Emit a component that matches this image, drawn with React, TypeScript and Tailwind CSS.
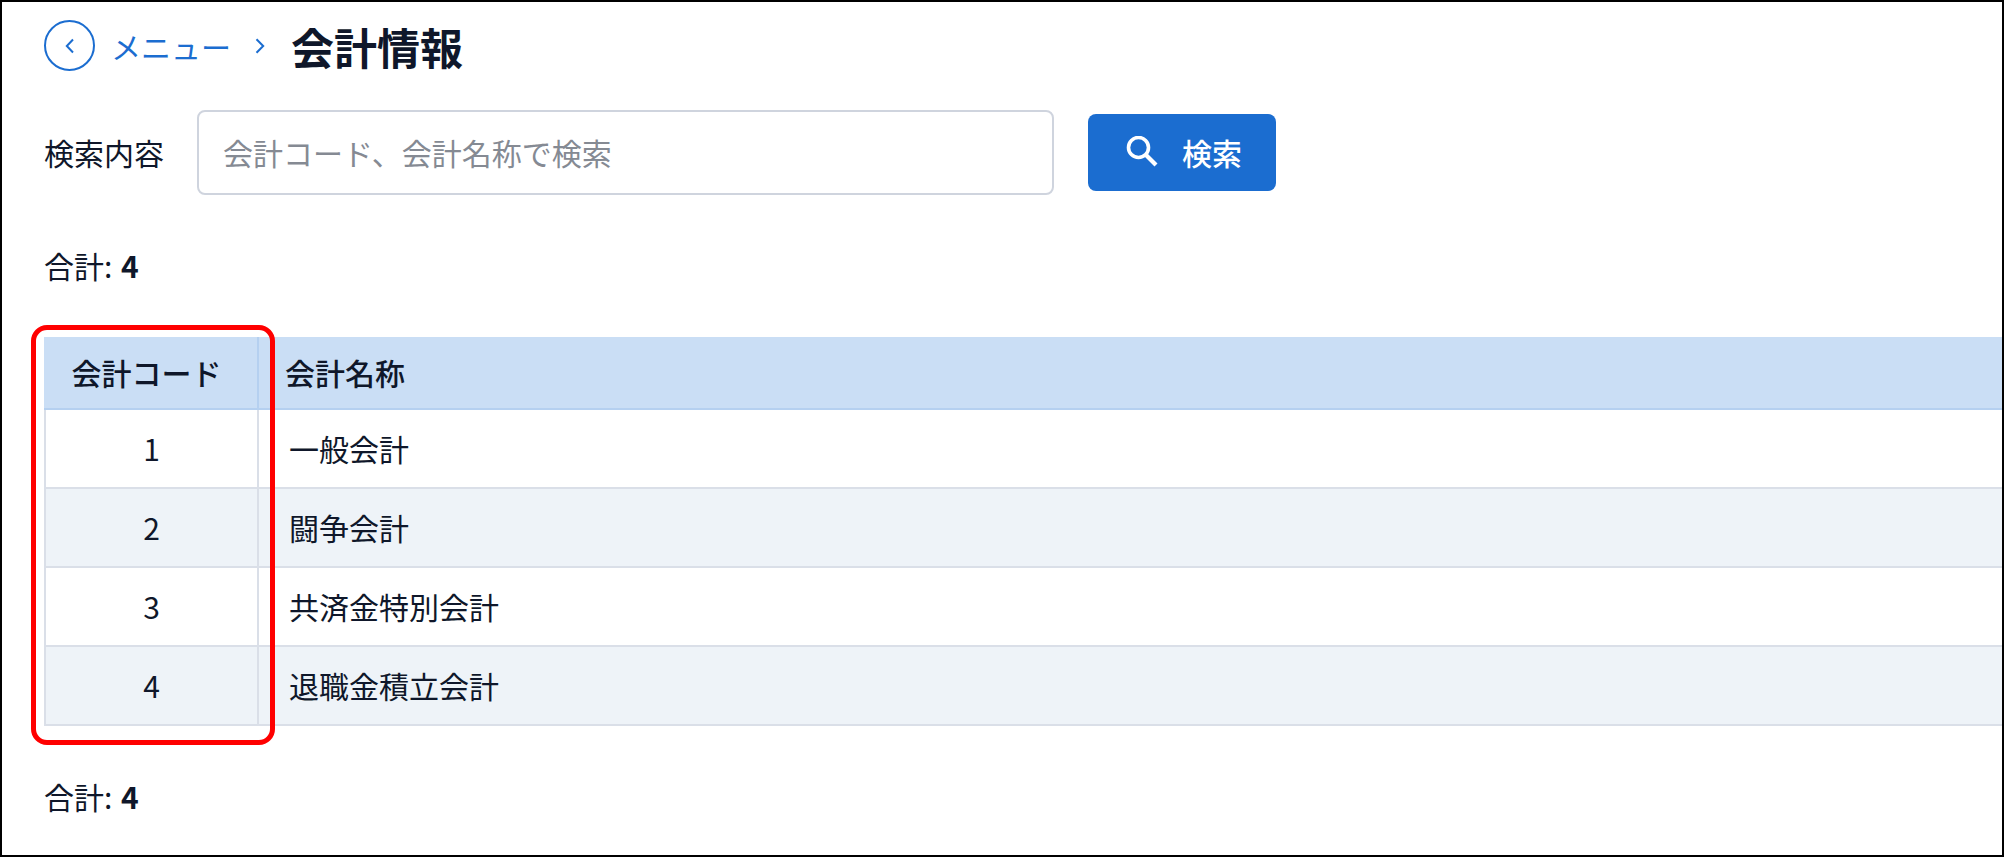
import React from "react";

type Account = { code: number; name: string };

const accounts: Account[] = [
  { code: 1, name: "一般会計" },
  { code: 2, name: "闘争会計" },
  { code: 3, name: "共済金特別会計" },
  { code: 4, name: "退職金積立会計" },
];

function Chevron({ direction }: { direction: "left" | "right" }) {
  return (
    <svg width="10" height="16" viewBox="0 0 10 16" fill="none" aria-hidden="true">
      <path
        d={direction === "left" ? "M8 1.5 1.8 8 8 14.5" : "M1.5 1.2 8.2 8 1.5 14.8"}
        stroke="currentColor"
        strokeWidth="2"
      />
    </svg>
  );
}

function SearchIcon() {
  return (
    <svg width="32" height="32" viewBox="0 0 32 32" fill="none" aria-hidden="true">
      <circle cx="12.5" cy="11.5" r="10" stroke="currentColor" strokeWidth="3.6" />
      <path d="M19.5 18.5 30 29" stroke="currentColor" strokeWidth="4.2" />
    </svg>
  );
}

function Total() {
  return (
    <p className="text-[30px] leading-11">
      合計: <strong className="ml-0.5 font-bold">{accounts.length}</strong>
    </p>
  );
}

export default function App() {
  return (
    <main
      lang="ja"
      className="min-h-screen overflow-hidden border-2 border-black bg-white pt-4 pb-8 pl-[42px] font-['Noto_Sans_CJK_JP',sans-serif] text-[#0f172a]"
    >
      <nav aria-label="パンくずリスト" className="flex h-[55px] items-center">
        <button
          type="button"
          aria-label="戻る"
          className="flex size-[51px] items-center justify-center rounded-full border-2 border-[#1b6dd0] text-[#1b6dd0]"
        >
          <Chevron direction="left" />
        </button>
        <a href="#menu" className="ml-4 text-[30px] leading-11 text-[#1b6dd0]">
          メニュー
        </a>
        <span className="ml-6 text-[#1b6dd0]">
          <Chevron direction="right" />
        </span>
        <h1 className="ml-[26px] text-[43px] leading-[56px] font-bold">会計情報</h1>
      </nav>

      <form className="mt-[37px] flex items-center" onSubmit={(e) => e.preventDefault()}>
        <label htmlFor="keyword" className="shrink-0 pb-0.5 text-[30px] leading-11">
          検索内容
        </label>
        <input
          id="keyword"
          type="text"
          placeholder="会計コード、会計名称で検索"
          className="ml-[33px] h-[85px] min-w-0 max-w-[857px] flex-1 rounded-lg border-2 border-[#cfd4de] px-6 pb-0.5 text-[30px] leading-11 placeholder:text-[#858a93]"
        />
        <button
          type="submit"
          className="ml-[34px] flex h-[77px] shrink-0 items-center gap-6 rounded-lg bg-[#1b6dd0] pr-[34px] pb-0.5 pl-[38px] text-[30px] leading-11 font-medium text-white"
        >
          <SearchIcon />
          検索
        </button>
      </form>

      <div className="mt-12">
        <Total />
      </div>

      <div className="relative mt-[50px]">
        <table className="w-full table-fixed border-separate border-spacing-0 text-[30px] leading-11">
          <thead>
            <tr className="h-[73px] bg-[#cadef5]">
              <th className="w-[215px] border-r-2 border-b-2 border-[#b5d0f0] pr-2 pb-0.5 text-center font-medium">
                会計コード
              </th>
              <th className="border-b-2 border-[#b5d0f0] pb-0.5 pl-[26px] text-left font-medium">
                会計名称
              </th>
            </tr>
          </thead>
          <tbody>
            {accounts.map((account) => (
              <tr key={account.code} className="h-[79px] even:bg-[#eef3f8]">
                <td className="border-x-2 border-b-2 border-[#dadfe8] pb-0.5 text-center">
                  {account.code}
                </td>
                <td className="border-b-2 border-[#dadfe8] pb-0.5 pl-[30px]">{account.name}</td>
              </tr>
            ))}
          </tbody>
        </table>
        <div className="pointer-events-none absolute -top-3 -bottom-[19px] -left-[13px] w-[244px] rounded-2xl border-5 border-[#ff0000]" />
      </div>

      <div className="mt-12">
        <Total />
      </div>
    </main>
  );
}
